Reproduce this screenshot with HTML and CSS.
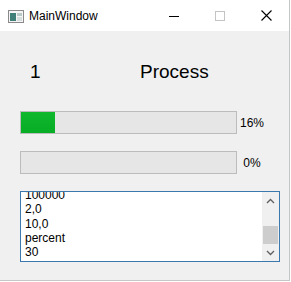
FILE: index.html
```html
<!DOCTYPE html>
<html>
<head>
  <meta charset="utf-8">
  <title>MainWindow</title>
  <link rel="stylesheet" href="styles.css">
</head>
<body>
<div class="window">
  <div class="titlebar">
    <svg class="app-icon" width="16" height="13" viewBox="0 0 16 13">
      <rect x="0.5" y="0.5" width="15" height="12" fill="#f4f4f4" stroke="#8a8a8a"/>
      <rect x="2" y="3" width="6" height="8" fill="#3f7f78"/>
      <rect x="9" y="3" width="5" height="3" fill="#b9c9c6"/>
      <rect x="9" y="7" width="5" height="4" fill="#d6dedd"/>
    </svg>
    <span class="title">MainWindow</span>
    <div class="controls">
      <div class="ctl">
        <svg width="10" height="10" viewBox="0 0 10 10"><line x1="0" y1="5.5" x2="10" y2="5.5" stroke="#000" stroke-width="1"/></svg>
      </div>
      <div class="ctl">
        <svg width="10" height="10" viewBox="0 0 10 10"><rect x="0.5" y="0.5" width="9" height="9" fill="none" stroke="#c4c4c4" stroke-width="1"/></svg>
      </div>
      <div class="ctl">
        <svg width="11" height="11" viewBox="0 0 11 11"><path d="M0.5 0.5 L10.5 10.5 M10.5 0.5 L0.5 10.5" stroke="#000" stroke-width="1.1"/></svg>
      </div>
    </div>
  </div>

  <div class="content">
    <div class="head-row">
      <span class="count">1</span>
      <span class="caption">Process</span>
    </div>

    <div class="bar-row first">
      <div class="bar"><div class="chunk" style="width:16%"></div></div>
      <span class="pct">16%</span>
    </div>
    <div class="bar-row">
      <div class="bar"></div>
      <span class="pct">0%</span>
    </div>

    <div class="textbox">
      <div class="lines">
        <div>100000</div>
        <div>2,0</div>
        <div>10,0</div>
        <div>percent</div>
        <div>30</div>
      </div>
      <div class="vscroll">
        <div class="arrow">
          <svg width="9" height="6" viewBox="0 0 9 6"><path d="M1 5 L4.5 1.5 L8 5" fill="none" stroke="#606060" stroke-width="1.3"/></svg>
        </div>
        <div class="track"><div class="thumb"></div></div>
        <div class="arrow">
          <svg width="9" height="6" viewBox="0 0 9 6"><path d="M1 1 L4.5 4.5 L8 1" fill="none" stroke="#606060" stroke-width="1.3"/></svg>
        </div>
      </div>
    </div>
  </div>
</div>
</body>
</html>
```

FILE: styles.css
```css
*{
  box-sizing: border-box;
}
body{
  margin: 0;
  background: #fff;
  font-family: "Liberation Sans", Arial, sans-serif;
}

/* the window frame */
.window{
  width: 290px;
  height: 281px;
  background: #f0f0f0;
  border-right: 1px solid #c6c6c6;
  border-bottom: 1px solid #c6c6c6;
  display: flex;
  flex-direction: column;
}

/* title bar */
.titlebar{
  height: 31px;
  background: #fff;
  display: flex;
  align-items: center;
  padding-left: 8px;
}
.app-icon{
  display: block;
  margin-top: 1px;
}
.title{
  margin-left: 5px;
  font-size: 12px;
  color: #000;
}
.controls{
  margin-left: auto;
  display: flex;
  height: 100%;
}
.ctl{
  width: 46px;
  height: 100%;
  display: flex;
  align-items: center;
  justify-content: center;
}
.ctl svg{
  display: block;
}

/* body of the window */
.content{
  padding: 30px 0 0 20px;
  display: flex;
  flex-direction: column;
}
.head-row{
  display: flex;
  font-size: 19px;
  line-height: 22px;
  color: #000;
}
.count{
  width: 120px;
  padding-left: 10px;
}

.bar-row{
  display: flex;
  align-items: center;
  margin-top: 17px;
}
.bar-row.first{
  margin-top: 28px;
}
.bar{
  width: 217px;
  height: 23px;
  border: 1px solid #bcbcbc;
  background: #e6e6e6;
}
.chunk{
  height: 100%;
  background: linear-gradient(#10b82e, #06ad25);
}
.pct{
  width: 30px;
  text-align: center;
  font-size: 12px;
  color: #000;
}

/* text box */
.textbox{
  margin-top: 17px;
  width: 260px;
  height: 71px;
  border: 1px solid #3b78ad;
  background: #fff;
  display: flex;
  overflow: hidden;
}
.lines{
  flex: 1;
  padding-left: 4px;
  margin-top: -4px;
  font-size: 12px;
  line-height: 14.3px;
  color: #000;
}
.vscroll{
  width: 17px;
  background: #f0f0f0;
  display: flex;
  flex-direction: column;
}
.arrow{
  height: 17px;
  display: flex;
  align-items: center;
  justify-content: center;
}
.track{
  flex: 1;
  display: flex;
  flex-direction: column;
  justify-content: flex-end;
  padding: 0 1px;
}
.thumb{
  height: 18px;
  background: #cdcdcd;
}
```
